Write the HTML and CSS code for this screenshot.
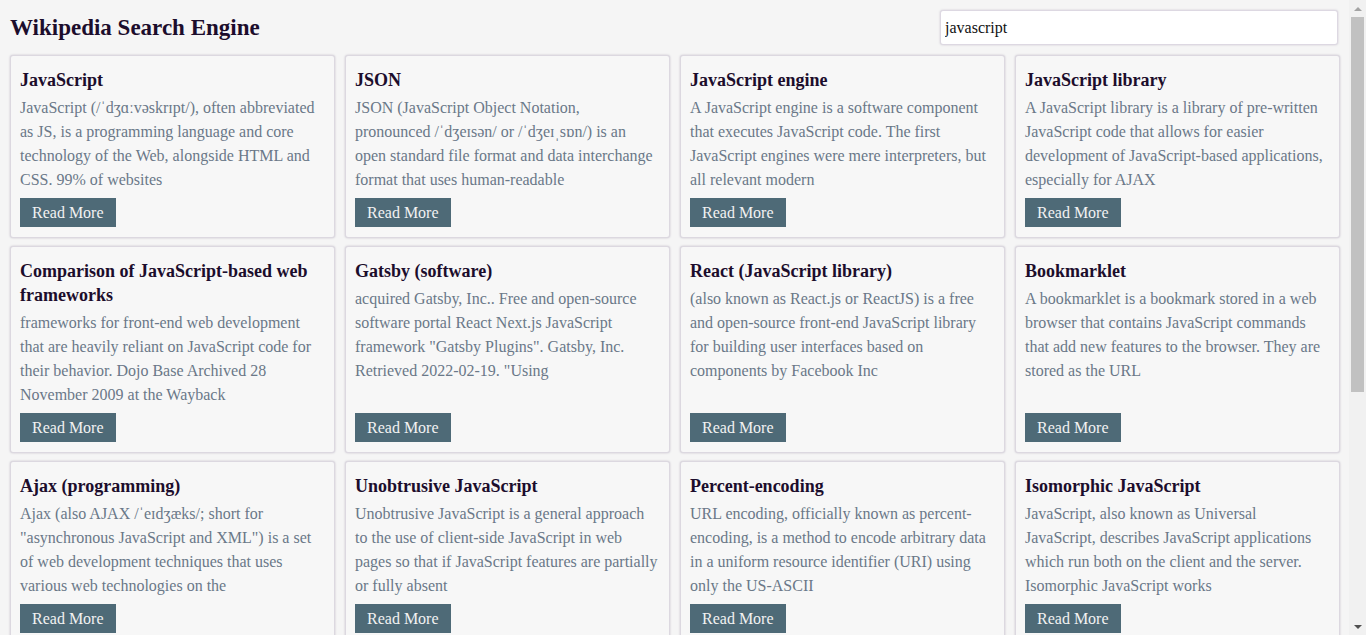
FILE: index.html
```html
<!DOCTYPE html>
<html lang="en">
<head>
<meta charset="utf-8">
<title>Wikipedia Search Engine</title>
<link rel="stylesheet" href="styles.css">
</head>
<body>
<div class="page">
<header class="topbar">
  <h1 class="site-title">Wikipedia Search Engine</h1>
  <input class="search" type="text" value="javascript">
</header>
<main class="results">
  <article class="card">
    <h2 class="card-title">JavaScript</h2>
    <p class="card-text">JavaScript (/ˈdʒɑːvəskrɪpt/), often abbreviated as JS, is a programming language and core technology of the Web, alongside HTML and CSS. 99% of websites</p>
    <a class="btn" href="#">Read More</a>
  </article>
  <article class="card">
    <h2 class="card-title">JSON</h2>
    <p class="card-text">JSON (JavaScript Object Notation, pronounced /ˈdʒeɪsən/ or /ˈdʒeɪˌsɒn/) is an open standard file format and data interchange format that uses human-readable</p>
    <a class="btn" href="#">Read More</a>
  </article>
  <article class="card">
    <h2 class="card-title">JavaScript engine</h2>
    <p class="card-text">A JavaScript engine is a software component that executes JavaScript code. The first JavaScript engines were mere interpreters, but all relevant modern</p>
    <a class="btn" href="#">Read More</a>
  </article>
  <article class="card">
    <h2 class="card-title">JavaScript library</h2>
    <p class="card-text">A JavaScript library is a library of pre-written JavaScript code that allows for easier development of JavaScript-based applications, especially for AJAX</p>
    <a class="btn" href="#">Read More</a>
  </article>
  <article class="card">
    <h2 class="card-title">Comparison of JavaScript-based web frameworks</h2>
    <p class="card-text">frameworks for front-end web development that are heavily reliant on JavaScript code for their behavior. Dojo Base Archived 28 November 2009 at the Wayback</p>
    <a class="btn" href="#">Read More</a>
  </article>
  <article class="card">
    <h2 class="card-title">Gatsby (software)</h2>
    <p class="card-text">acquired Gatsby, Inc.. Free and open-source software portal React Next.js JavaScript framework "Gatsby Plugins". Gatsby, Inc. Retrieved 2022-02-19. "Using</p>
    <a class="btn" href="#">Read More</a>
  </article>
  <article class="card">
    <h2 class="card-title">React (JavaScript library)</h2>
    <p class="card-text">(also known as React.js or ReactJS) is a free and open-source front-end JavaScript library for building user interfaces based on components by Facebook Inc</p>
    <a class="btn" href="#">Read More</a>
  </article>
  <article class="card">
    <h2 class="card-title">Bookmarklet</h2>
    <p class="card-text">A bookmarklet is a bookmark stored in a web browser that contains JavaScript commands that add new features to the browser. They are stored as the URL</p>
    <a class="btn" href="#">Read More</a>
  </article>
  <article class="card">
    <h2 class="card-title">Ajax (programming)</h2>
    <p class="card-text">Ajax (also AJAX /ˈeɪdʒæks/; short for "asynchronous JavaScript and XML") is a set of web development techniques that uses various web technologies on the</p>
    <a class="btn" href="#">Read More</a>
  </article>
  <article class="card">
    <h2 class="card-title">Unobtrusive JavaScript</h2>
    <p class="card-text">Unobtrusive JavaScript is a general approach to the use of client-side JavaScript in web pages so that if JavaScript features are partially or fully absent</p>
    <a class="btn" href="#">Read More</a>
  </article>
  <article class="card">
    <h2 class="card-title">Percent-encoding</h2>
    <p class="card-text">URL encoding, officially known as percent-encoding, is a method to encode arbitrary data in a uniform resource identifier (URI) using only the US-ASCII</p>
    <a class="btn" href="#">Read More</a>
  </article>
  <article class="card">
    <h2 class="card-title">Isomorphic JavaScript</h2>
    <p class="card-text">JavaScript, also known as Universal JavaScript, describes JavaScript applications which run both on the client and the server. Isomorphic JavaScript works</p>
    <a class="btn" href="#">Read More</a>
  </article>
  <article class="card">
    <h2 class="card-title">JavaScript syntax</h2>
    <p class="card-text">The syntax of JavaScript is the set of rules that define a correctly structured JavaScript program. The examples below make use of the log function</p>
    <a class="btn" href="#">Read More</a>
  </article>
  <article class="card">
    <h2 class="card-title">TypeScript</h2>
    <p class="card-text">TypeScript is a free and open source programming language developed and maintained by Microsoft. It is a strict syntactical superset of JavaScript</p>
    <a class="btn" href="#">Read More</a>
  </article>
  <article class="card">
    <h2 class="card-title">Node.js</h2>
    <p class="card-text">Node.js is a cross-platform, open-source server environment that can run on Windows, Linux, Unix, macOS, and more. Node.js is a back-end JavaScript</p>
    <a class="btn" href="#">Read More</a>
  </article>
  <article class="card">
    <h2 class="card-title">JQuery</h2>
    <p class="card-text">jQuery is a JavaScript library designed to simplify HTML DOM tree traversal and manipulation, as well as event handling, CSS animation, and Ajax</p>
    <a class="btn" href="#">Read More</a>
  </article>
</main>
</div>
<div class="scrollbar" aria-hidden="true">
  <span class="sb-btn sb-up"></span>
  <span class="sb-track"><span class="sb-thumb"></span></span>
  <span class="sb-btn sb-down"></span>
</div>
</body>
</html>
```

FILE: styles.css
```css
html {
  background: #f5f5f5;
}

body {
  margin: 0;
  background: #f5f5f5;
  font-family: "Liberation Serif", "Times New Roman", serif;
  color: #1c0d2c;
}

.page {
  margin-right: 17px;
}

.topbar {
  display: flex;
  align-items: center;
  justify-content: space-between;
  padding: 10px 11px 0 10px;
  height: 35px;
}

.site-title {
  margin: 0;
  font-size: 23px;
  font-weight: 700;
  color: #1c0d2c;
  line-height: 35px;
}

.search {
  box-sizing: border-box;
  width: 398px;
  height: 35px;
  padding: 0 4px;
  border: 1px solid #ddd8e2;
  border-radius: 3px;
  box-shadow: 0 0 2px rgba(80, 60, 100, 0.25);
  background: #fff;
  font-family: "Liberation Serif", "Times New Roman", serif;
  font-size: 16px;
  color: #111;
  outline: none;
}

.results {
  display: grid;
  grid-template-columns: repeat(4, 1fr);
  column-gap: 10px;
  row-gap: 8px;
  padding: 10px 9px 10px 10px;
}

.card {
  display: flex;
  flex-direction: column;
  align-items: flex-start;
  padding: 12px 11px 10px 9px;
  background: #f7f7f7;
  border: 1px solid #dcd8e0;
  border-radius: 3px;
  box-shadow: 0 0 2px rgba(80, 60, 100, 0.3);
}

.card-title {
  margin: 0 0 4px;
  font-size: 18px;
  line-height: 24px;
  font-weight: 700;
  color: #1c0d2c;
}

.card-text {
  margin: 0 0 6px;
  font-size: 16px;
  line-height: 24px;
  color: #6a7888;
}

.btn {
  margin-top: auto;
  display: inline-block;
  height: 29px;
  line-height: 29px;
  padding: 0 12px;
  background: #4e6a77;
  color: #f2f2f2;
  font-size: 16px;
  text-decoration: none;
}

/* window scrollbar, drawn over the right edge */
.scrollbar {
  position: fixed;
  top: 0;
  right: 0;
  bottom: 0;
  width: 17px;
  display: flex;
  flex-direction: column;
  background: #f1f1f1;
}

.sb-btn {
  flex: 0 0 17px;
  display: flex;
  align-items: center;
  justify-content: center;
}

.sb-btn::before {
  content: "";
  width: 0;
  height: 0;
  border-left: 4px solid transparent;
  border-right: 4px solid transparent;
}

.sb-up::before {
  border-bottom: 4px solid #a3a3a3;
}

.sb-down::before {
  border-top: 4px solid #505050;
}

.sb-track {
  flex: 1;
  display: flex;
  flex-direction: column;
  padding: 0 2px;
}

.sb-thumb {
  height: 375px;
  background: #c1c1c1;
}
```
